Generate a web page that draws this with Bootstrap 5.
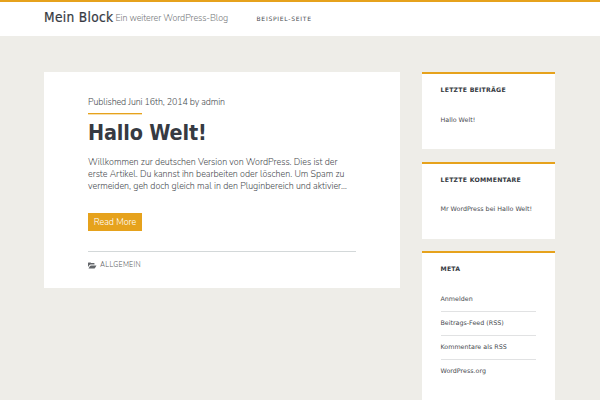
<!DOCTYPE html>
<html lang="de">
<head>
<meta charset="utf-8">
<meta name="viewport" content="width=device-width, initial-scale=1">
<title>Mein Block</title>
<link href="https://cdn.jsdelivr.net/npm/bootstrap@5.3.0/dist/css/bootstrap.min.css" rel="stylesheet">
<style>
:root{--gold:#e6a21c;--ink:#363a42;--soft:#484b50}
html,body{height:400px;overflow:hidden}
body{background:#eeede8;color:var(--soft);font-family:"DejaVu Sans",sans-serif;font-size:8.9px;line-height:12px}
.site-head{height:36px;border-top:2px solid var(--gold);padding:0 44px}
.site-title{font:400 13.6px/30px "DejaVu Sans Condensed","DejaVu Sans",sans-serif;font-stretch:condensed;letter-spacing:.33px;color:var(--ink);width:71.5px;white-space:nowrap;-webkit-text-stroke:.2px var(--ink)}
.light-face{font-family:Nunito,Muli,"Open Sans",sans-serif;font-weight:300}
.tagline{line-height:33px;color:#76787b;letter-spacing:-.08px;width:141px}
.menu-link{font-size:6px;line-height:34px;letter-spacing:.74px;color:var(--soft)}
.page-wrap{height:364px;overflow:hidden;padding:36px 0 0 44px;gap:22px}
.post{width:355.5px;height:216px;padding:24px 43.5px 0 44px}
.post-date{letter-spacing:-.1px}
.post-rule{width:53.5px;height:1px;background:var(--gold);box-shadow:0 1px #f7dfae;margin-top:5px}
.post-title{font:700 21.4px/24px "DejaVu Sans Condensed","DejaVu Sans",sans-serif;font-stretch:condensed;letter-spacing:-.15px;color:var(--ink);margin:7px 0 11px;white-space:nowrap}
.post-copy{white-space:nowrap}
.more-link{height:18px;width:54px;line-height:18px;background:var(--gold);margin-top:21px}
.post-foot{border-top:1px solid #d3d8d9;margin-top:20px;padding-top:7px;font-size:7px;letter-spacing:.3px;gap:3px;color:#5d6064}
.side{width:133px;gap:12.4px}
.widget{border-top:2px solid var(--gold);padding:10px 19px 0;height:77.2px;font-size:6.35px;white-space:nowrap}
.widget-tall{height:170px}
.widget h2{font-size:6.2px;line-height:12px;font-weight:700;letter-spacing:.24px;color:var(--ink);margin:0 0 11.5px}
.widget li{height:24px;padding-top:6px}
.widget li+li{border-top:1px solid #e1e2e3;padding-top:5px}
</style>
<script src="https://cdn.jsdelivr.net/npm/bootstrap@5.3.0/dist/js/bootstrap.bundle.min.js"></script>
</head>
<body>
<header class="site-head bg-white d-flex align-items-start">
<span class="site-title">Mein Block</span>
<span class="tagline light-face">Ein weiterer WordPress-Blog</span>
<nav><a class="menu-link text-decoration-none d-block" href="#">BEISPIEL-SEITE</a></nav>
</header>
<main class="page-wrap d-flex align-items-start">
<article class="post bg-white">
<div class="post-date light-face">Published Juni 16th, 2014 by admin</div>
<div class="post-rule"></div>
<h1 class="post-title">Hallo Welt!</h1>
<p class="post-copy light-face mb-0">Willkommen zur deutschen Version von WordPress. Dies ist der<br>erste Artikel. Du kannst ihn bearbeiten oder löschen. Um Spam zu<br>vermeiden, geh doch gleich mal in den Pluginbereich und aktivier…</p>
<a class="more-link light-face d-block text-center text-white text-decoration-none" href="#">Read More</a>
<footer class="post-foot d-flex align-items-center light-face">
<svg width="9" height="7" viewBox="0 0 18 14"><path fill="#63666a" d="M0 2Q0 1 1 1h4q1 0 1 1h6q1 0 1 1v2H5Q4 5 3 6L0 10zM1 13l3-5q1-1 2-1h11l-3 5q-1 1-2 1z"/></svg>
<span>ALLGEMEIN</span></footer>
</article>
<aside class="side d-flex flex-column">
<section class="widget bg-white"><h2>LETZTE BEITRÄGE</h2><ul class="list-unstyled"><li>Hallo Welt!</li></ul></section>
<section class="widget bg-white"><h2>LETZTE KOMMENTARE</h2><ul class="list-unstyled"><li>Mr WordPress bei Hallo Welt!</li></ul></section>
<section class="widget widget-tall bg-white"><h2>META</h2><ul class="list-unstyled"><li>Anmelden</li><li>Beitrags-Feed (RSS)</li><li>Kommentare als RSS</li><li>WordPress.org</li></ul></section>
</aside>
</main>
</body>
</html>
